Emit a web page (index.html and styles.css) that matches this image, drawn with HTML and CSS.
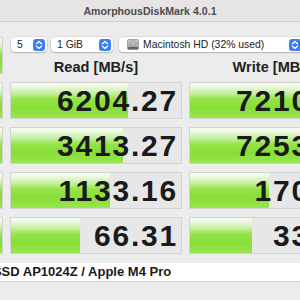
FILE: index.html
```html
<!DOCTYPE html>
<html lang="en">
<head>
<meta charset="UTF-8">
<meta name="viewport" content="width=device-width, initial-scale=1.0">
<title>AmorphousDiskMark</title>
<link rel="stylesheet" href="styles.css">
</head>
<body>

<div class="titlebar">AmorphousDiskMark 4.0.1</div>

<div class="bench">
  <div class="btn btn-all"><div class="bar full"></div></div>

  <div class="toolbar">
    <div class="popup popup-count">
      <span class="popup-label">5</span>
      <span class="stepper"><svg width="12" height="12" viewBox="0 0 12 12"><path d="M3.5 4.8 L6 2.5 L8.5 4.8 M3.5 7.2 L6 9.5 L8.5 7.2" fill="none" stroke="#fff" stroke-width="1.3" stroke-linecap="round" stroke-linejoin="round"/></svg></span>
    </div>
    <div class="popup popup-size">
      <span class="popup-label">1 GiB</span>
      <span class="stepper"><svg width="12" height="12" viewBox="0 0 12 12"><path d="M3.5 4.8 L6 2.5 L8.5 4.8 M3.5 7.2 L6 9.5 L8.5 7.2" fill="none" stroke="#fff" stroke-width="1.3" stroke-linecap="round" stroke-linejoin="round"/></svg></span>
    </div>
    <div class="popup popup-disk">
      <svg class="disk-icon" width="12" height="11" viewBox="0 0 12 11">
        <defs>
          <linearGradient id="hd" x1="0" y1="0" x2="0" y2="1">
            <stop offset="0" stop-color="#d2d2d2"/>
            <stop offset="0.7" stop-color="#a9a9a9"/>
            <stop offset="1" stop-color="#7d7d7d"/>
          </linearGradient>
        </defs>
        <rect x="0.5" y="0.5" width="11" height="10" rx="1.5" fill="url(#hd)" stroke="#777" stroke-width="0.6"/>
        <ellipse cx="6" cy="4" rx="3.5" ry="2.4" fill="#bdbdbd" stroke="#8a8a8a" stroke-width="0.5"/>
        <rect x="1.2" y="8" width="9.6" height="1.8" fill="#5f5f5f"/>
      </svg>
      <span class="popup-label">Macintosh HD (32% used)</span>
      <span class="stepper"><svg width="12" height="12" viewBox="0 0 12 12"><path d="M3.5 4.8 L6 2.5 L8.5 4.8 M3.5 7.2 L6 9.5 L8.5 7.2" fill="none" stroke="#fff" stroke-width="1.3" stroke-linecap="round" stroke-linejoin="round"/></svg></span>
    </div>
  </div>

  <div class="head">Read [MB/s]</div>
  <div class="head">Write [MB/s]</div>

  <div class="btn"><div class="bar full"></div></div>
  <div class="cell"><div class="bar" style="width: 117px"></div><div class="value">6204.27</div></div>
  <div class="cell"><div class="bar" style="width: 119px"></div><div class="value">7210.45</div></div>

  <div class="btn"><div class="bar full"></div></div>
  <div class="cell"><div class="bar" style="width: 112px"></div><div class="value">3413.27</div></div>
  <div class="cell"><div class="bar" style="width: 119px"></div><div class="value">7253.82</div></div>

  <div class="btn"><div class="bar full"></div></div>
  <div class="cell"><div class="bar" style="width: 99px"></div><div class="value">1133.16</div></div>
  <div class="cell"><div class="bar" style="width: 79px"></div><div class="value">170.16</div></div>

  <div class="btn"><div class="bar full"></div></div>
  <div class="cell"><div class="bar" style="width: 69px"></div><div class="value">66.31</div></div>
  <div class="cell"><div class="bar" style="width: 62px"></div><div class="value">33.81</div></div>

  <div class="footer">APPLE SSD AP1024Z / Apple M4 Pro</div>
</div>

</body>
</html>
```

FILE: styles.css
```css
html, body {
  margin: 0;
  padding: 0;
  width: 300px;
  height: 300px;
  overflow: hidden;
}

body {
  font-family: "Liberation Sans", Arial, sans-serif;
  background-color: #ececec;
  color: #1c1c1c;
}

.titlebar {
  height: 21px;
  line-height: 22px;
  background-color: #e6e4e4;
  border-bottom: 1px solid #d2d2d2;
  text-align: center;
  font-size: 10.6px;
  font-weight: bold;
  color: #4d4d4d;
}

.bench {
  display: grid;
  grid-template-columns: 60px 172px 172px;
  grid-template-rows: 15px 14px repeat(4, 37px) 20px;
  column-gap: 7px;
  row-gap: 8px;
  margin-left: -57px;
  padding-top: 15px;
  width: 418px;
}

/* green buttons on the left */
.btn {
  display: grid;
  box-sizing: border-box;
  border: 1px solid #d3d3d3;
  background-color: #e7e7e7;
}

.btn-all {
  grid-row: 1 / 3;
}

.toolbar {
  grid-column: 2 / 4;
  display: flex;
  align-items: center;
  padding-left: 1px;
}

.popup {
  display: flex;
  align-items: center;
  box-sizing: border-box;
  height: 15px;
  background-color: #fff;
  border-radius: 4px;
  box-shadow: 0 0 0 0.5px rgba(0, 0, 0, 0.14), 0 1px 1.5px rgba(0, 0, 0, 0.18);
  font-size: 10.4px;
  color: #222;
  padding-left: 6px;
  padding-right: 2px;
}

.popup-label {
  flex: 1;
  white-space: nowrap;
}

.popup-count {
  width: 36px;
  margin-right: 4px;
}

.popup-size {
  width: 62px;
  margin-right: 6px;
}

.popup-disk {
  width: 184px;
  padding-left: 8px;
}

.disk-icon {
  margin-right: 4px;
}

.stepper {
  display: flex;
  width: 12px;
  height: 12px;
  border-radius: 3px;
  background-color: #3a7ff6;
}

.head {
  text-align: center;
  font-size: 14.6px;
  font-weight: bold;
  line-height: 14px;
  color: #222;
}

.cell {
  display: grid;
  box-sizing: border-box;
  border: 1px solid #d3d3d3;
  background-color: #e7e7e7;
}

.bar,
.value {
  grid-area: 1 / 1;
}

.bar {
  justify-self: start;
  height: 100%;
  background: linear-gradient(to bottom, #f6fbf1 0%, #edf8e2 10%, #c3f09a 30%, #95e449 46%, #87de37 70%, #98e64f 100%);
}

.bar.full {
  width: 100%;
}

.value {
  justify-self: end;
  align-self: center;
  padding-right: 3px;
  font-size: 30px;
  font-weight: bold;
  letter-spacing: 1.8px;
  line-height: 1;
  color: #1a1a1a;
}

.footer {
  grid-column: 1 / -1;
  margin-top: 1px;
  display: flex;
  align-items: center;
  padding-left: 3px;
  padding-bottom: 2px;
  box-sizing: border-box;
  background-color: #fff;
  border-bottom: 1px solid #d6d6d6;
  font-size: 13px;
  font-weight: bold;
  color: #1a1a1a;
  white-space: nowrap;
}
```
